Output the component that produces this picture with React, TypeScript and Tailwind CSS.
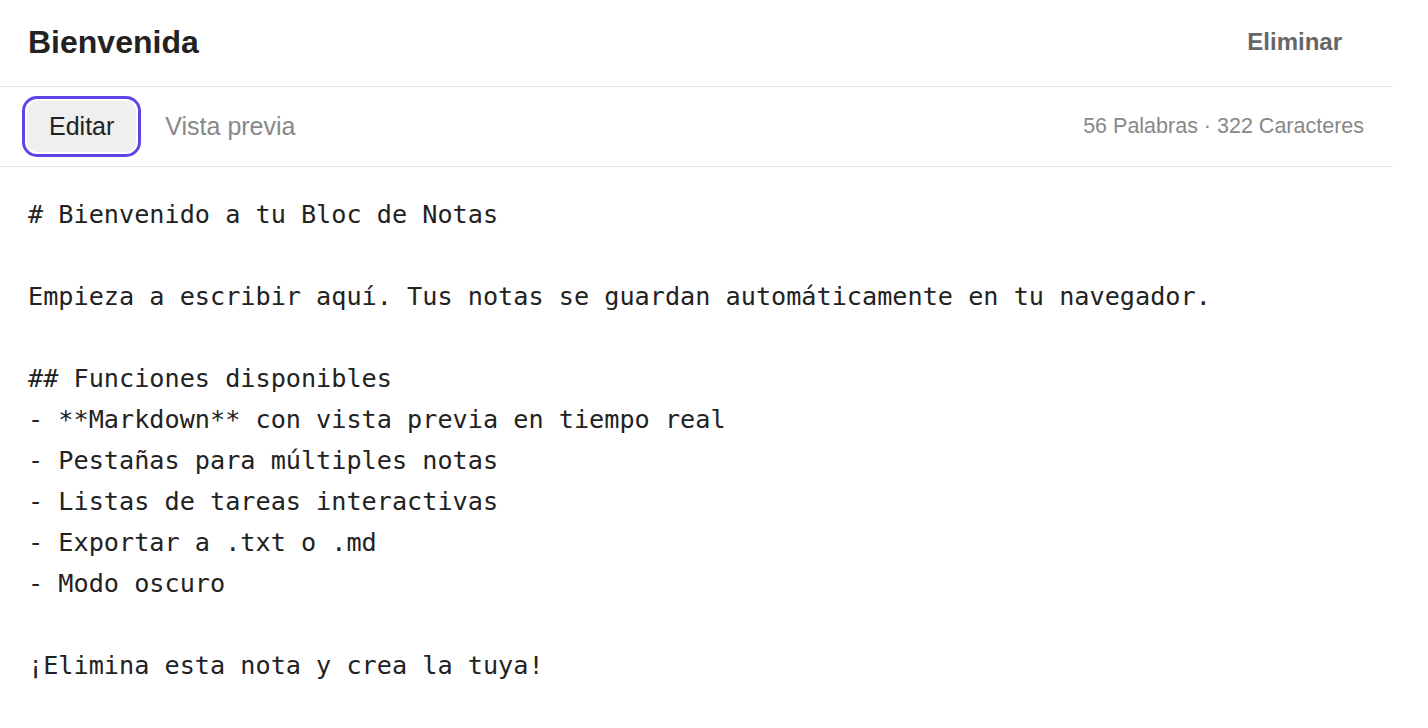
import { useState } from 'react';

const noteText = `# Bienvenido a tu Bloc de Notas

Empieza a escribir aquí. Tus notas se guardan automáticamente en tu navegador.

## Funciones disponibles
- **Markdown** con vista previa en tiempo real
- Pestañas para múltiples notas
- Listas de tareas interactivas
- Exportar a .txt o .md
- Modo oscuro

¡Elimina esta nota y crea la tuya!`;

export default function App() {
  const [mode, setMode] = useState<'edit' | 'preview'>('edit');

  return (
    <div className="min-h-screen bg-white font-['Liberation_Sans',Arial,sans-serif]">
      <div className="w-[1393px]">
        {/* Header */}
        <div className="flex h-[87px] items-center justify-between border-b border-[#e6e6e6] pb-[2px] pl-[28px] pr-[35px]">
          <h1 className="text-[32px] font-bold leading-none text-[#222]">Bienvenida</h1>
          <button className="px-[16px] text-[24px] font-bold text-[#666]">Eliminar</button>
        </div>

        {/* Toolbar */}
        <div className="flex h-[80px] items-center justify-between border-b border-[#e6e6e6] pl-[27px] pr-[29px]">
          <div className="flex items-center gap-[10px]">
            <button
              onClick={() => setMode('edit')}
              className={`h-[51px] rounded-[10px] px-[22px] text-[25px] ${
                mode === 'edit'
                  ? 'bg-[#efefef] text-[#222] ring-[3px] ring-[#5f44ea] ring-offset-2'
                  : 'text-[#888]'
              }`}
            >
              Editar
            </button>
            <button
              onClick={() => setMode('preview')}
              className={`h-[51px] rounded-[10px] px-[19px] text-[25px] ${
                mode === 'preview' ? 'bg-[#efefef] text-[#222]' : 'text-[#888]'
              }`}
            >
              Vista previa
            </button>
          </div>
          <div className="text-[21.5px] text-[#888]">56 Palabras · 322 Caracteres</div>
        </div>

        {/* Editor */}
        <div className="px-[28px] pt-[27px]">
          <pre className="whitespace-pre-wrap font-['DejaVu_Sans_Mono',monospace] text-[25.2px] leading-[41px] text-[#222]">
            {noteText}
          </pre>
        </div>
      </div>
    </div>
  );
}
